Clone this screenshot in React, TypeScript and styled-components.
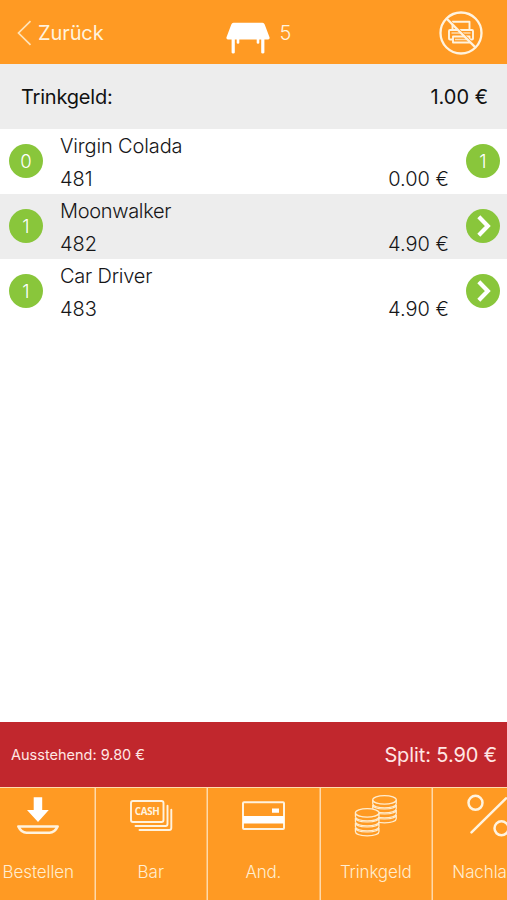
import React from 'react';
import styled, { createGlobalStyle } from 'styled-components';

const ORANGE = '#ff9a23';
const GREEN = '#89c63b';
const CREAM = '#fff3df';

const GlobalStyle = createGlobalStyle`
  * { box-sizing: border-box; }
  body { margin: 0; background: #fff; }
`;

const Screen = styled.div`
  display: flex;
  flex-direction: column;
  width: 507px;
  height: 900px;
  overflow: hidden;
  background: #fff;
  color: #161618;
  font-family: Inter, 'Liberation Sans', sans-serif;
  font-size: 20px;
  font-weight: 400;
`;

const Header = styled.header`
  display: grid;
  grid-template-columns: 1fr auto 1fr;
  align-items: center;
  flex: none;
  height: 64px;
  padding: 2px 24px 0 17px;
  background: ${ORANGE};
  color: ${CREAM};
`;

const BackButton = styled.button`
  display: flex;
  align-items: center;
  gap: 6px;
  padding: 0;
  border: 0;
  background: none;
  color: inherit;
  font: inherit;
  letter-spacing: -0.1px;
`;

const TableTitle = styled.div`
  display: flex;
  align-items: center;
  gap: 10px;
  margin-left: 17px;
  font-weight: 300;
  svg { margin-top: 9px; }
`;

const PrinterToggle = styled.button`
  display: flex;
  justify-self: end;
  padding: 0;
  border: 0;
  background: none;
`;

const TipRow = styled.section`
  display: flex;
  align-items: center;
  justify-content: space-between;
  flex: none;
  height: 65px;
  padding: 1px 19px 0 21px;
  background: #ededed;
  color: #111;
`;

const TipText = styled.span<{ $spacing: number }>`
  letter-spacing: ${(p) => p.$spacing}px;
`;

const Items = styled.ul`
  flex: 1;
  margin: 0;
  padding: 0;
  list-style: none;
`;

const Item = styled.li`
  display: grid;
  grid-template-columns: 34px 1fr 34px;
  align-items: start;
  column-gap: 17px;
  height: 65.2px;
  padding: 0 7px 0 9px;
  font-weight: 300;
  &:nth-child(even) { background: #ededed; }
`;

const Badge = styled.span`
  display: flex;
  align-items: center;
  justify-content: center;
  width: 34px;
  height: 34px;
  margin-top: 14.6px;
  padding-top: 1px;
  border-radius: 50%;
  background: ${GREEN};
  color: #fff;
  font-size: 18.5px;
`;

const ArrowBadge = styled(Badge)`
  padding: 0 0 0 2px;
`;

const ItemBody = styled.div`
  display: flex;
  flex-direction: column;
  padding-top: 1px;
  line-height: 33px;
`;

const ItemName = styled.span<{ $spacing: number }>`
  letter-spacing: ${(p) => p.$spacing}px;
`;

const ItemLine = styled.div`
  display: flex;
  justify-content: space-between;
`;

const Summary = styled.section`
  display: flex;
  align-items: center;
  justify-content: space-between;
  flex: none;
  height: 65px;
  padding: 1px 10px 0 11px;
  background: #c1272d;
  color: #ffe6e4;
`;

const Outstanding = styled.span`
  margin-top: -1px;
  font-size: 14.5px;
`;

const Split = styled.span`
  letter-spacing: -0.1px;
`;

const Toolbar = styled.nav`
  display: flex;
  flex: none;
  height: 113px;
  border-top: 1px solid #ffdcae;
  background: ${ORANGE};
`;

const ToolStrip = styled.div`
  display: flex;
  flex: none;
  margin-left: -18px;
`;

const Tool = styled.button`
  display: flex;
  flex: none;
  flex-direction: column;
  align-items: center;
  width: 112.5px;
  padding: 5px 0 0;
  border: 0;
  background: none;
  color: #ffedd0;
  font-family: inherit;
  font-size: 17px;
  font-weight: 300;
  box-shadow: 1px 0 0 #ffd9a9, inset -0.5px 0 0 #ffd9a9;
`;

const ToolLabel = styled.span<{ $spacing: number }>`
  margin-top: 21px;
  line-height: 24px;
  letter-spacing: ${(p) => p.$spacing}px;
`;

const BackIcon = () => (
  <svg width="15" height="26" viewBox="0 0 15 26" fill="none" stroke="#ffe3b8" strokeWidth="1.7">
    <path d="M13.5 1.2 1.5 13l12 11.8" />
  </svg>
);

const TableIcon = () => (
  <svg width="44" height="32" viewBox="0 0 44 32" fill="#fff">
    <path d="M7.5.8h29q1.6 0 2.2 1.6l4.8 12.8q.6 2-1.4 2.2h-3.7v13.2q0 .9-1.6.9t-1.6-.9V17.4h-1.9v3.7q0 .7-1.3.7t-1.3-.7v-3.7H13.3v3.7q0 .7-1.3.7t-1.3-.7v-3.7H8.800v13.200q0 .9-1.600.9t-1.600-.9V17.400H1.900Q0 17.200.5 15.200L5.300 2.400Q5.900.8 7.500.8Z" />
  </svg>
);

const NoPrinterIcon = () => (
  <svg width="44" height="44" viewBox="0 0 44 44" fill="none" stroke={CREAM}>
    <path d="M13.5 18.5v-7.700h17v7.700M13.500 28.500H11q-1 0-1-1V20q0-1 1-1h22q1 0 1 1v7.500q0 1-1 1h-2.500M14 25.500h16.500v6H14Z" strokeWidth="1.900" strokeLinejoin="round" />
    <path d="M12.500 22h19M16 28.500h12" strokeWidth="1.700" strokeOpacity="0.75" />
    <path d="m9 7.500 27 27" stroke={ORANGE} strokeWidth="1.500" />
    <circle cx="22" cy="22" r="20.500" strokeWidth="2.300" />
    <path d="m7.500 7.500 29 29" strokeWidth="2.400" />
  </svg>
);

const ChevronIcon = () => (
  <svg width="16" height="22" viewBox="0 0 16 22" fill="none" stroke="#fff" strokeWidth="4.200">
    <path d="m2.800 1.800 9 9.200-9 9.200" />
  </svg>
);

const OrderIcon = () => (
  <svg width="44" height="46" viewBox="0 0 44 46">
    <path d="M17.700 4.200h8.500v12.700h6.600L22 28.900 11 16.900h6.700Z" fill="#fff" />
    <path d="M2.300 33.400h39.400q-3 6.300-8.200 6.300h-23q-5.200 0-8.200-6.300Z" fill="none" stroke={CREAM} strokeWidth="2.500" strokeLinejoin="round" />
  </svg>
);

const CashIcon = () => (
  <svg width="44" height="46" viewBox="0 0 44 46" fill="none" stroke={CREAM} strokeWidth="1.900" strokeLinecap="round">
    <rect x="2" y="8" width="32.500" height="21" rx="2" />
    <path d="M38.500 12.800v18.200q0 2-2 2H6.500M42.300 16.700v18.300q0 2-2 2H10.500" />
    <text x="18.300" y="22.200" textAnchor="middle" fill={CREAM} stroke="none" fontFamily="Open Sans, sans-serif" fontSize="9.800" fontWeight="700" textLength="25">CASH</text>
  </svg>
);

const CardIcon = () => (
  <svg width="44" height="46" viewBox="0 0 44 46">
    <rect x="2" y="9.300" width="41" height="26.700" rx="1" fill="none" stroke={CREAM} strokeWidth="2" />
    <path d="M2 23h41v7.500H2ZM31 15.500h7v4.200h-7Z" fill="#fff" />
  </svg>
);

const CoinStack = ({ x, y, levels }: { x: number; y: number; levels: number[] }) => (
  <g transform={`translate(${x} ${y})`}>
    {levels.map((level) => (
      <path key={level} d={`M.2 ${level}v3.800c0 5.600 23.600 5.600 23.600 0v-3.800c0 5.600-23.600 5.600-23.600 0`} />
    ))}
    <ellipse cx="12" cy="4.500" rx="11.800" ry="4.200" />
  </g>
);

const CoinsIcon = () => (
  <svg width="44" height="46" viewBox="0 0 44 46" fill={ORANGE} stroke="#ffedd0" strokeWidth="1.200">
    <CoinStack x={18.500} y={2.300} levels={[19.500, 14.500, 9.500, 4.500]} />
    <CoinStack x={1.200} y={15.300} levels={[19.500, 14.500, 9.500, 4.500]} />
  </svg>
);

const PercentIcon = () => (
  <svg width="44" height="46" viewBox="0 0 44 46" fill="none" stroke={CREAM} strokeWidth="2.500" strokeLinecap="round">
    <circle cx="9.500" cy="9.800" r="7" />
    <circle cx="35.500" cy="35.300" r="7" />
    <path d="M40 5.300 5.500 39.300" />
  </svg>
);

const items = [
  { count: 0, name: 'Virgin Colada', code: '481', price: '0.00 €', split: 1, spacing: -0.14 },
  { count: 1, name: 'Moonwalker', code: '482', price: '4.90 €', split: 0, spacing: -0.32 },
  { count: 1, name: 'Car Driver', code: '483', price: '4.90 €', split: 0, spacing: -0.22 },
];

const tools = [
  { label: 'Bestellen', Icon: OrderIcon, spacing: -0.1 },
  { label: 'Bar', Icon: CashIcon, spacing: 0 },
  { label: 'And.', Icon: CardIcon, spacing: -0.2 },
  { label: 'Trinkgeld', Icon: CoinsIcon, spacing: -0.15 },
  { label: 'Nachlass', Icon: PercentIcon, spacing: -0.1 },
];

export default function App() {
  return (
    <Screen>
      <GlobalStyle />
      <Header>
        <BackButton><BackIcon />Zurück</BackButton>
        <TableTitle><TableIcon />5</TableTitle>
        <PrinterToggle aria-label="Drucker aus"><NoPrinterIcon /></PrinterToggle>
      </Header>
      <TipRow>
        <TipText $spacing={-0.2}>Trinkgeld:</TipText>
        <TipText $spacing={0}>1.00 €</TipText>
      </TipRow>
      <Items>
        {items.map((item) => (
          <Item key={item.code}>
            <Badge>{item.count}</Badge>
            <ItemBody>
              <ItemName $spacing={item.spacing}>{item.name}</ItemName>
              <ItemLine><span>{item.code}</span><span>{item.price}</span></ItemLine>
            </ItemBody>
            {item.split ? <Badge>{item.split}</Badge> : <ArrowBadge><ChevronIcon /></ArrowBadge>}
          </Item>
        ))}
      </Items>
      <Summary>
        <Outstanding>Ausstehend: 9.80 €</Outstanding>
        <Split>Split: 5.90 €</Split>
      </Summary>
      <Toolbar>
        <ToolStrip>
          {tools.map(({ label, Icon, spacing }) => (
            <Tool key={label}>
              <Icon />
              <ToolLabel $spacing={spacing}>{label}</ToolLabel>
            </Tool>
          ))}
        </ToolStrip>
      </Toolbar>
    </Screen>
  );
}
